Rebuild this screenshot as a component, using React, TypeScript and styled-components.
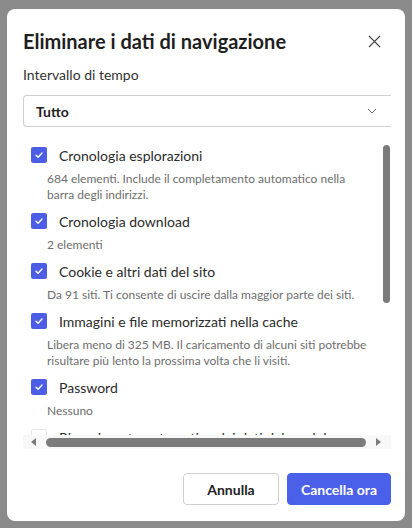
import React from "react";
import styled, { createGlobalStyle } from "styled-components";

const Global = createGlobalStyle`
  html, body { margin: 0; padding: 0; }
  body {
    background: #8b8b8b;
    font-family: Lato, "Noto Sans", sans-serif;
    width: 412px;
    height: 528px;
    overflow: hidden;
  }
`;

const Dialog = styled.div`
  box-sizing: border-box;
  margin: 9px 0 0 7px;
  width: 398px;
  height: 512px;
  background: #ffffff;
  border-radius: 8px;
  padding: 18px 14px 16px 16px;
  display: flex;
  flex-direction: column;
`;

const Header = styled.div`
  display: flex;
  align-items: center;
  justify-content: space-between;
  height: 28px;
`;

const Title = styled.h1`
  margin: 0;
  font-size: 20px;
  line-height: 28px;
  font-weight: 700;
  color: #1f1f1f;
`;

const CloseButton = styled.button`
  border: none;
  background: none;
  padding: 0;
  width: 20px;
  height: 20px;
  margin-right: 7px;
  display: flex;
  align-items: center;
  justify-content: center;
  color: #444;
`;

const FieldLabel = styled.div`
  margin-top: 10px;
  font-size: 14px;
  line-height: 20px;
  color: #333;
`;

const Select = styled.div`
  box-sizing: border-box;
  margin-top: 10px;
  height: 32px;
  width: 368px;
  border: 1px solid #d1d1d1;
  border-right: none;
  border-radius: 4px 0 0 4px;
  display: flex;
  align-items: center;
  justify-content: space-between;
  padding: 0 14px 0 12px;
  font-size: 14px;
  font-weight: 700;
  color: #1f1f1f;
`;

const ListArea = styled.div`
  margin-top: 12px;
  width: 368px;
  display: flex;
  flex-direction: column;
`;

const Viewport = styled.div`
  position: relative;
  height: 296px;
  overflow: hidden;
  padding: 4px 0 0 8px;
  box-sizing: border-box;
`;

const VThumb = styled.div`
  position: absolute;
  right: 1px;
  top: 6px;
  width: 7px;
  height: 158px;
  border-radius: 4px;
  background: #7b7b7b;
`;

const Item = styled.div`
  margin-bottom: 6px;
`;

const ItemRow = styled.div`
  display: flex;
  align-items: center;
  height: 24px;
  gap: 12px;
`;

const Check = styled.span<{ $checked: boolean }>`
  box-sizing: border-box;
  width: 16px;
  height: 16px;
  border-radius: 2px;
  background: ${(p) => (p.$checked ? "#4c5de6" : "#ffffff")};
  border: ${(p) => (p.$checked ? "none" : "1px solid #e6e6e6")};
  display: flex;
  align-items: center;
  justify-content: center;
  flex: none;
`;

const ItemLabel = styled.span`
  font-size: 14px;
  color: #2b2b2b;
  white-space: nowrap;
`;

const Desc = styled.div`
  margin-top: 4px;
  padding-left: 16px;
  width: 326px;
  font-size: 12px;
  line-height: 16px;
  color: #6e6e6e;
`;

const HBar = styled.div`
  height: 14px;
  background: #f8f8f8;
  display: flex;
  align-items: center;
  padding: 0 10px 0 8px;
  gap: 10px;
`;

const HThumb = styled.div`
  flex: 1;
  height: 9px;
  border-radius: 5px;
  background: #7b7b7b;
`;

const Arrow = styled.span<{ $dir: "left" | "right" }>`
  width: 0;
  height: 0;
  border-top: 4px solid transparent;
  border-bottom: 4px solid transparent;
  ${(p) =>
    p.$dir === "left"
      ? "border-right: 5px solid #7b7b7b;"
      : "border-left: 5px solid #7b7b7b;"}
`;

const Footer = styled.div`
  margin-top: auto;
  display: flex;
  justify-content: flex-end;
  gap: 8px;
`;

const Button = styled.button<{ $primary?: boolean }>`
  box-sizing: border-box;
  height: 32px;
  border-radius: 4px;
  font-family: Lato, "Noto Sans", sans-serif;
  font-size: 14px;
  font-weight: 700;
  padding: 0;
  width: ${(p) => (p.$primary ? "104px" : "96px")};
  border: 1px solid ${(p) => (p.$primary ? "#4a60e8" : "#cfcfcf")};
  background: ${(p) => (p.$primary ? "#4a60e8" : "#ffffff")};
  color: ${(p) => (p.$primary ? "#ffffff" : "#222")};
`;

const CheckIcon = () => (
  <svg width="10" height="10" viewBox="0 0 10 10" fill="none">
    <path d="M2 5.2 L4.1 7.2 L8 3" stroke="#fff" strokeWidth="1.4" strokeLinecap="round" strokeLinejoin="round" />
  </svg>
);

const items = [
  { label: "Cronologia esplorazioni", desc: "684 elementi. Include il completamento automatico nella barra degli indirizzi.", checked: true },
  { label: "Cronologia download", desc: "2 elementi", checked: true },
  { label: "Cookie e altri dati del sito", desc: "Da 91 siti. Ti consente di uscire dalla maggior parte dei siti.", checked: true },
  { label: "Immagini e file memorizzati nella cache", desc: "Libera meno di 325 MB. Il caricamento di alcuni siti potrebbe risultare più lento la prossima volta che li visiti.", checked: true },
  { label: "Password", desc: "Nessuno", checked: true },
  { label: "Riempimento automatico dei dati del modulo", desc: "", checked: false },
];

export default function App() {
  return (
    <>
      <Global />
      <Dialog>
        <Header>
          <Title>Eliminare i dati di navigazione</Title>
          <CloseButton aria-label="Chiudi">
            <svg width="13" height="13" viewBox="0 0 13 13">
              <path d="M1 1 L12 12 M12 1 L1 12" stroke="#444" strokeWidth="1.1" />
            </svg>
          </CloseButton>
        </Header>
        <FieldLabel>Intervallo di tempo</FieldLabel>
        <Select>
          <span>Tutto</span>
          <svg width="10" height="6" viewBox="0 0 10 6">
            <path d="M1 1 L5 5 L9 1" stroke="#666" strokeWidth="1" fill="none" />
          </svg>
        </Select>
        <ListArea>
          <Viewport>
            {items.map((it) => (
              <Item key={it.label}>
                <ItemRow>
                  <Check $checked={it.checked}>{it.checked && <CheckIcon />}</Check>
                  <ItemLabel>{it.label}</ItemLabel>
                </ItemRow>
                {it.desc && <Desc>{it.desc}</Desc>}
              </Item>
            ))}
            <VThumb />
          </Viewport>
          <HBar>
            <Arrow $dir="left" />
            <HThumb />
            <Arrow $dir="right" />
          </HBar>
        </ListArea>
        <Footer>
          <Button>Annulla</Button>
          <Button $primary>Cancella ora</Button>
        </Footer>
      </Dialog>
    </>
  );
}
